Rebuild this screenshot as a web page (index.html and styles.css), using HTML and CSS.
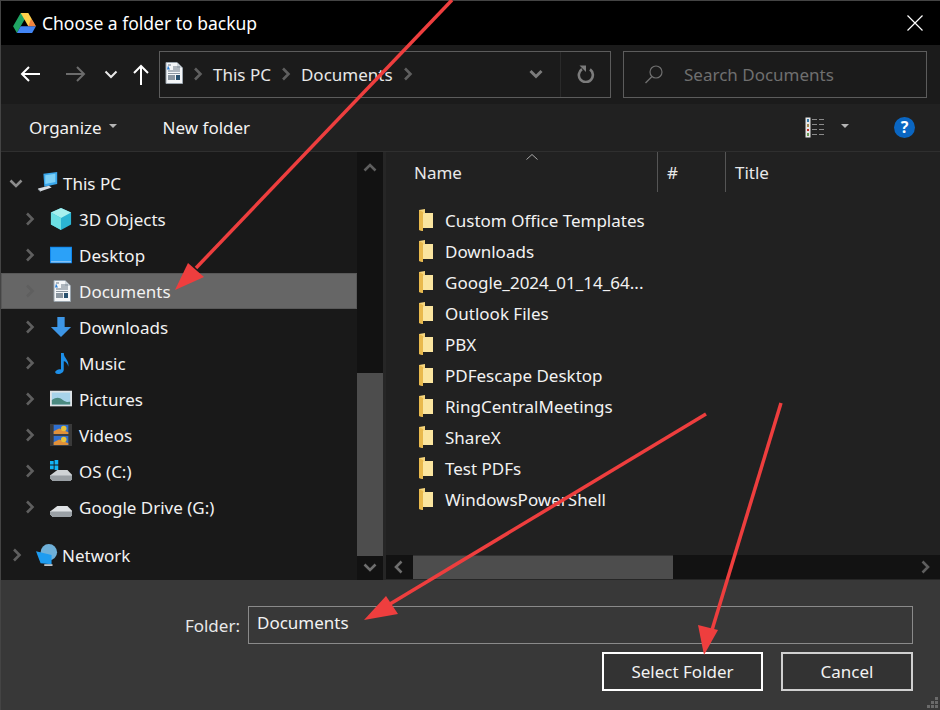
FILE: index.html
```html
<!DOCTYPE html>
<html lang="en">
  <head>
    <meta charset="UTF-8" />
    <title>Choose a folder to backup</title>
    <link rel="stylesheet" href="styles.css">
  </head>
  <body>
    <svg width="0" height="0" class="defs">
      <defs>
        <symbol id="doc" viewBox="0 0 18 22">
          <path d="M1 .5h11l5.500 5.500v15.500h-16.500z" fill="#f4f6f8" stroke="#9aa4ad"/>
          <path d="M12 .5v5.500h5.500z" fill="#cfd6dc"/>
          <path d="M3 3h3M8 5h7M8 7h7M3 9h12" stroke="#6a7885" fill="none"/>
          <path d="M3 3.500l-1 4h3z" fill="#2a7fd6"/>
          <rect x="3" y="11" width="12" height="1" fill="#8b96a0"/>
          <rect x="3" y="13" width="7" height="5" fill="#8b96a0"/>
          <rect x="11" y="13" width="4" height="5" fill="#28506e"/>
        </symbol>
        <symbol id="folder" viewBox="0 0 14 22">
          <path d="M0 1l6-1v4h8v15h-10v3l-4-1z" fill="#f6d67d"/>
          <path d="M4 5l2-1h8v15h-10z" fill="#fbe59f"/>
          <path d="M0 1l4 2v19l-4-1z" fill="#e9b94c"/>
        </symbol>
        <symbol id="chev" viewBox="0 0 10 14">
          <path d="M2 1.500l5.500 5.500-5.500 5.500" fill="none" stroke="#5f5f5f" stroke-width="2.600"/>
        </symbol>
      </defs>
    </svg>

    <div class="dialog">
      <header class="titlebar">
        <svg class="drive-logo" viewBox="0 0 24 21" width="23" height="20">
          <path d="M8 0h8l-8 14-4 7-4-7z" fill="#1fa463"/>
          <path d="M8 0h8l8 14h-8z" fill="#ffd04b"/>
          <path d="M4 21l4-7h16l-4 7z" fill="#4285f4"/>
          <path d="M8 14l4-7 4 7z" fill="#fff" opacity="0"/>
          <path d="M19 6l5 8h-8z" fill="#ea4335" opacity=".55"/>
        </svg>
        <span class="title">Choose a folder to backup</span>
        <svg class="close" viewBox="0 0 16 16" width="16" height="16">
          <path d="M.5.500l15 15M15.500.500l-15 15" stroke="#fff" stroke-width="1.200" fill="none"/>
        </svg>
      </header>

      <div class="navbar">
        <div class="nav-btns">
          <svg width="20" height="16" viewBox="0 0 20 16"><path d="M20 8H2M9 1L2 8l7 7" fill="none" stroke="#fff" stroke-width="2"/></svg>
          <svg class="fwd" width="20" height="16" viewBox="0 0 20 16"><path d="M0 8h18M11 1l7 7-7 7" fill="none" stroke="#6c6c6c" stroke-width="2"/></svg>
          <svg class="recent" width="14" height="9" viewBox="0 0 14 9"><path d="M1.500 1.500L7 7l5.500-5.500" fill="none" stroke="#e8e8e8" stroke-width="2"/></svg>
          <svg class="up" width="16" height="21" viewBox="0 0 16 21"><path d="M8 21V2M1 9l7-7 7 7" fill="none" stroke="#fff" stroke-width="2"/></svg>
        </div>
        <div class="address">
          <svg class="addr-doc"><use href="#doc"/></svg>
          <svg class="crumb-chev"><use href="#chev"/></svg>
          <span class="crumb">This PC</span>
          <svg class="crumb-chev"><use href="#chev"/></svg>
          <span class="crumb">Documents</span>
          <svg class="crumb-chev"><use href="#chev"/></svg>
          <svg class="addr-drop" width="14" height="10" viewBox="0 0 14 10"><path d="M1.500 2L7 7.500 12.500 2" fill="none" stroke="#7c7c7c" stroke-width="3"/></svg>
          <span class="addr-sep"></span>
          <svg class="refresh" width="18" height="18" viewBox="0 0 18 18"><path d="M5 4.200A7 7 0 1 0 13 4.400" fill="none" stroke="#7c7c7c" stroke-width="2.600"/><path d="M2.500 .5h6.500v6.500z" fill="#7c7c7c"/></svg>
        </div>
        <div class="search">
          <svg width="18" height="19" viewBox="0 0 18 19"><circle cx="11" cy="7" r="6" fill="none" stroke="#6f6f6f" stroke-width="1.200"/><path d="M7 11.500L.5 18" stroke="#6f6f6f" stroke-width="1.400"/></svg>
          <span>Search Documents</span>
        </div>
      </div>

      <div class="toolbar">
        <span class="tool">Organize</span>
        <span class="caret"></span>
        <span class="tool new-folder">New folder</span>
        <svg class="views" width="21" height="21" viewBox="0 0 21 21">
          <rect x=".5" y=".5" width="5" height="20" fill="#e8e8e8"/>
          <rect x="2" y="2" width="2" height="3" fill="#3579a8"/>
          <rect x="2" y="7" width="2" height="3" fill="#a38a52"/>
          <rect x="2" y="12" width="2" height="2" fill="#c02d25"/>
          <rect x="2" y="16" width="2" height="3" fill="#6b9a58"/>
          <path d="M7 2.500h5M14 2.500h5M7 7.500h5M14 7.500h5M7 12.500h5M14 12.500h5M7 17.500h5M14 17.500h5" stroke="#8a8a8a"/>
        </svg>
        <span class="caret view-caret"></span>
        <span class="help">?</span>
      </div>

      <div class="panes">
        <nav class="tree-pane">
          <div class="tree">
            <div class="row top first"><svg class="open" width="14" height="9" viewBox="0 0 14 9"><path d="M1.500 1.500L7 7l5.500-5.500" fill="none" stroke="#8c8c8c" stroke-width="2.600"/></svg>
              <svg class="ico" viewBox="0 0 24 24"><path d="M7 2l15-2v13l-14 3z" fill="#3aa7ec"/><path d="M9 3.500l11-1.500v9l-11 2z" fill="#7dd0f7"/><path d="M1 18l12-3 3 2-12 4z" fill="#d8dde2"/><path d="M1 18l3 3v1l-3-3z" fill="#9aa4ad"/></svg>
              <span>This PC</span></div>
            <div class="row"><svg class="chev"><use href="#chev"/></svg>
              <svg class="ico" viewBox="0 0 24 24"><path d="M12 0l11 5v13l-11 6-11-6V5z" fill="#2bb5d3"/><path d="M1 5l11 6 11-6-11-5z" fill="#a6f0ee"/><path d="M1 5l11 6v13l-11-6z" fill="#6ce0e4"/></svg>
              <span>3D Objects</span></div>
            <div class="row"><svg class="chev"><use href="#chev"/></svg>
              <svg class="ico" viewBox="0 0 24 24"><rect y="3" width="24" height="18" fill="#0f84ea"/><rect x="1" y="4" width="22" height="15" fill="#2ba1f8"/><path d="M1 19h22v1H1z" fill="#cfe9fd"/></svg>
              <span>Desktop</span></div>
            <div class="row selected"><svg class="chev"><use href="#chev"/></svg>
              <svg class="ico doc-ico"><use href="#doc"/></svg>
              <span>Documents</span></div>
            <div class="row"><svg class="chev"><use href="#chev"/></svg>
              <svg class="ico" viewBox="0 0 24 24"><path d="M8 1h8v11h7L12 23 1 12h7z" fill="#3d96e6"/></svg>
              <span>Downloads</span></div>
            <div class="row"><svg class="chev"><use href="#chev"/></svg>
              <svg class="ico" viewBox="0 0 24 24"><path d="M12 1h3c0 6 6 7 5 15-1-4-3-6-5-6v9c0 3-3 5-6 5s-4-2-3-3 3-3 6-2z" fill="#1d8fe8"/></svg>
              <span>Music</span></div>
            <div class="row"><svg class="chev"><use href="#chev"/></svg>
              <svg class="ico" viewBox="0 0 24 24"><rect y="3" width="24" height="17" fill="#dfe3e6"/><rect x="2" y="5" width="20" height="13" fill="#a7d3ea"/><path d="M2 13c5-3 8-3 12 0s6 2 8 2v3H2z" fill="#4b8a80"/></svg>
              <span>Pictures</span></div>
            <div class="row"><svg class="chev"><use href="#chev"/></svg>
              <svg class="ico" viewBox="0 0 24 24"><rect width="24" height="24" fill="#3a3a3a"/><rect x="4" y="1" width="16" height="10" fill="#2f6fd0"/><rect x="4" y="13" width="16" height="10" fill="#2f6fd0"/><path d="M4 8l6-3 10 4v2H4zM4 20l6-3 10 4v2H4z" fill="#e0913a"/><circle cx="15" cy="5" r="3" fill="#e8c23a"/><circle cx="15" cy="17" r="3" fill="#e8c23a"/></svg>
              <span>Videos</span></div>
            <div class="row"><svg class="chev"><use href="#chev"/></svg>
              <svg class="ico" viewBox="0 0 24 24"><path d="M0 17l8-6h11l5 5v5l-2 2H3l-3-3z" fill="#cfd3d6"/><path d="M0 17h24v4l-2 2H3l-3-3z" fill="#9aa0a5"/><path d="M0 1h4v4H0zM5 0l4-1v6H5zM0 6h4v4H0zM5 6h4v5H5z" fill="#12b3f5"/></svg>
              <span>OS (C:)</span></div>
            <div class="row"><svg class="chev"><use href="#chev"/></svg>
              <svg class="ico" viewBox="0 0 24 24"><path d="M0 17l8-6h11l5 5v5l-2 2H3l-3-3z" fill="#dfe2e5"/><path d="M0 17h24v4l-2 2H3l-3-3z" fill="#9aa0a5"/></svg>
              <span>Google Drive (G:)</span></div>
            <div class="row top network"><svg class="chev"><use href="#chev"/></svg>
              <svg class="ico" viewBox="0 0 24 24"><circle cx="14" cy="9" r="9" fill="#6fb0d8"/><path d="M0 8l17 4v10l-12-1z" fill="#1e9cf0"/><path d="M9 22h9v2H9z" fill="#bcc4ca"/></svg>
              <span>Network</span></div>
          </div>
          <div class="vscroll">
            <svg class="sb-up" width="14" height="9" viewBox="0 0 14 9"><path d="M1.500 7.500L7 2l5.500 5.500" fill="none" stroke="#5e5e5e" stroke-width="2.600"/></svg>
            <div class="sb-track"><div class="sb-thumb"></div></div>
            <svg class="sb-down" width="14" height="9" viewBox="0 0 14 9"><path d="M1.500 1.500L7 7l5.500-5.500" fill="none" stroke="#6e6e6e" stroke-width="2.600"/></svg>
          </div>
        </nav>

        <section class="files">
          <div class="columns">
            <div class="col col-name">Name
              <svg class="sort" width="12" height="6" viewBox="0 0 12 6"><path d="M.5 5.500L6 .5l5.500 5" fill="none" stroke="#a8a8a8"/></svg>
            </div>
            <div class="col col-num">#</div>
            <div class="col">Title</div>
          </div>
          <ul class="file-list">
            <li><svg class="folder"><use href="#folder"/></svg>Custom Office Templates</li>
            <li><svg class="folder"><use href="#folder"/></svg>Downloads</li>
            <li><svg class="folder"><use href="#folder"/></svg>Google_2024_01_14_64...</li>
            <li><svg class="folder"><use href="#folder"/></svg>Outlook Files</li>
            <li><svg class="folder"><use href="#folder"/></svg>PBX</li>
            <li><svg class="folder"><use href="#folder"/></svg>PDFescape Desktop</li>
            <li><svg class="folder"><use href="#folder"/></svg>RingCentralMeetings</li>
            <li><svg class="folder"><use href="#folder"/></svg>ShareX</li>
            <li><svg class="folder"><use href="#folder"/></svg>Test PDFs</li>
            <li><svg class="folder"><use href="#folder"/></svg>WindowsPowerShell</li>
          </ul>
          <div class="hscroll">
            <svg width="9" height="14" viewBox="0 0 9 14"><path d="M7.500 1.500L2 7l5.500 5.500" fill="none" stroke="#6e6e6e" stroke-width="2.600"/></svg>
            <div class="hs-track"><div class="hs-thumb"></div></div>
            <svg width="9" height="14" viewBox="0 0 9 14"><path d="M1.500 1.500L7 7l-5.500 5.500" fill="none" stroke="#5e5e5e" stroke-width="2.600"/></svg>
          </div>
        </section>
      </div>

      <footer class="bottom">
        <div class="folder-row">
          <label class="folder-label">Folder:</label>
          <div class="folder-input">Documents</div>
        </div>
        <div class="buttons">
          <button class="btn btn-main">Select Folder</button>
          <button class="btn">Cancel</button>
        </div>
        <svg class="grip" width="12" height="12" viewBox="0 0 12 12"><path d="M8 0h3v3H8zM4 4h3v3H4zM8 4h3v3H8zM0 8h3v3H0zM4 8h3v3H4zM8 8h3v3H8z" fill="#6a6a6a"/></svg>
      </footer>
    </div>

    <!-- red annotation arrows drawn over the dialog -->
    <svg class="arrows" width="940" height="710" viewBox="0 0 940 710">
      <g stroke="#ee3e3e" stroke-width="3.500" fill="#ee3e3e">
        <path d="M452 0L196 268"/>
        <path d="M175 290l13-27 16 14z" stroke="none"/>
        <path d="M706 414L390 604"/>
        <path d="M364 620l22-24 12 18z" stroke="none"/>
        <path d="M781 403L712 630"/>
        <path d="M704 655l-6-30 20 5z" stroke="none"/>
      </g>
    </svg>
  </body>
</html>
```

FILE: styles.css
```css
* {
  margin: 0;
  padding: 0;
  box-sizing: border-box;
}

body {
  position: relative;
  width: 940px;
  height: 710px;
  overflow: hidden;
  background: #383838;
  font-family: "Noto Sans", "Open Sans", sans-serif;
  font-size: 17px;
  color: #f2f2f2;
}

.defs {
  position: absolute;
}

.dialog {
  height: 710px;
  display: flex;
  flex-direction: column;
  border-top: 1px solid #444;
  border-left: 1px solid #444;
}

/* title bar */
.titlebar {
  height: 44px;
  flex: none;
  background: #000;
  display: flex;
  align-items: center;
  padding-left: 12px;
}

.title {
  margin-left: 6px;
  font-size: 17.500px;
  color: #fff;
}

.close {
  margin-left: auto;
  margin-right: 17px;
}

/* nav bar */
.navbar {
  height: 59px;
  flex: none;
  background: #1b1b1b;
  display: flex;
  align-items: center;
  padding: 0 12px 1px 0;
}

.nav-btns {
  width: 158px;
  display: flex;
  align-items: center;
  padding-left: 19px;
}

.fwd {
  margin-left: 26px;
}

.recent {
  margin-left: 18px;
}

.up {
  margin-left: 15px;
}

.address {
  width: 452px;
  height: 47px;
  border: 1px solid #5c5c5c;
  display: flex;
  align-items: center;
  padding-left: 5px;
}

.addr-doc {
  width: 18px;
  height: 22px;
  margin-top: -3px;
}

.crumb-chev {
  width: 10px;
  height: 14px;
  margin: 0 10px;
}

.crumb {
  color: #e8e8e8;
}

.addr-drop {
  margin-left: auto;
  margin-right: 17px;
}

.addr-sep {
  width: 1px;
  height: 45px;
  background: #2a2a2a;
}

.refresh {
  margin: 0 15px 0 16px;
}

.search {
  width: 304px;
  height: 47px;
  margin-left: 12px;
  border: 1px solid #5c5c5c;
  display: flex;
  align-items: center;
  padding-left: 21px;
  color: #6f6f6f;
}

.search span {
  margin-left: 21px;
}

/* toolbar */
.toolbar {
  height: 48px;
  flex: none;
  background: #212121;
  border-bottom: 1px solid #2f2f2f;
  display: flex;
  align-items: center;
  padding-left: 28px;
}

.tool {
  color: #f2f2f2;
}

.caret {
  width: 0;
  height: 0;
  margin-left: 7px;
  margin-top: -3px;
  border-left: 4px solid transparent;
  border-right: 4px solid transparent;
  border-top: 4px solid #b5b5b5;
}

.new-folder {
  margin-left: 46px;
}

.views {
  margin-left: auto;
}

.view-caret {
  margin-left: 15px;
}

.help {
  width: 21px;
  height: 21px;
  margin-left: 45px;
  margin-right: 25px;
  border-radius: 50%;
  background: #0a66c2;
  color: #fff;
  font-size: 16px;
  font-weight: 700;
  line-height: 21px;
  text-align: center;
}

/* panes */
.panes {
  height: 428px;
  flex: none;
  display: flex;
}

.tree-pane {
  width: 385px;
  flex: none;
  display: flex;
  background: #191919;
  border-right: 3px solid #262626;
}

.tree {
  width: 356px;
  flex: none;
  padding-top: 13px;
}

.row {
  height: 36px;
  display: flex;
  align-items: center;
  padding-left: 24px;
  color: #f2f2f2;
}

.row.top {
  padding-left: 11px;
}

.row.network {
  margin-top: 12px;
}

.row.selected {
  background: #666;
  border: 1px solid #585858;
  padding-left: 23px;
}

.chev {
  width: 10px;
  height: 14px;
}

.row.selected .chev path {
  stroke: #8e8e8e;
}

.row .open {
  margin-left: -3px;
}

.ico {
  width: 22px;
  height: 22px;
  flex: none;
  margin-left: 15px;
  margin-right: 7px;
}

.row.top .ico {
  margin-left: 14px;
  margin-right: 4px;
}

.doc-ico {
  width: 18px;
  margin-left: 18px;
  margin-right: 8px;
}

.vscroll {
  width: 26px;
  flex: none;
  background: #121212;
  display: flex;
  flex-direction: column;
  align-items: center;
}

.sb-up {
  margin-top: 11px;
  flex: none;
}

.sb-down {
  margin-bottom: 8px;
  flex: none;
}

.sb-track {
  flex: 1;
  width: 100%;
  display: flex;
  flex-direction: column;
  justify-content: flex-end;
}

.sb-thumb {
  height: 183px;
  margin-bottom: 7px;
  background: #4d4d4d;
}

/* file list */
.files {
  flex: 1;
  display: flex;
  flex-direction: column;
  background: #212121;
}

.columns {
  height: 40px;
  flex: none;
  display: flex;
  color: #e8e8e8;
}

.col {
  display: flex;
  align-items: center;
  padding-left: 9px;
  position: relative;
}

.col-name {
  width: 272px;
  padding-left: 28px;
  border-right: 1px solid #555;
}

.col-num {
  width: 68px;
  border-right: 1px solid #555;
}

.sort {
  position: absolute;
  top: 2px;
  left: 140px;
}

.file-list {
  list-style: none;
  flex: 1;
  padding-top: 13px;
}

.file-list li {
  height: 31px;
  display: flex;
  align-items: center;
  padding-left: 33px;
}

.folder {
  width: 14px;
  height: 22px;
  margin-right: 12px;
  margin-top: -2px;
}

.hscroll {
  height: 25px;
  flex: none;
  background: #121212;
  display: flex;
  align-items: center;
  padding: 0 10px 0 8px;
  border-bottom: 1px solid #262626;
}

.hs-track {
  flex: 1;
  height: 100%;
  margin: 0 8px 0 10px;
}

.hs-thumb {
  width: 260px;
  height: 100%;
  background: #4d4d4d;
  border-top: 1px solid #333;
}

/* bottom part */
.bottom {
  flex: 1;
  background: #383838;
  position: relative;
  padding: 26px 27px 0 0;
}

.folder-row {
  display: flex;
  align-items: center;
  justify-content: flex-end;
}

.folder-label {
  margin-right: 8px;
  color: #e8e8e8;
}

.folder-input {
  width: 665px;
  height: 38px;
  border: 1px solid #8a8a8a;
  padding-left: 8px;
  line-height: 32px;
  color: #f2f2f2;
}

.buttons {
  display: flex;
  justify-content: flex-end;
  gap: 18px;
  margin-top: 8px;
}

.btn {
  width: 132px;
  height: 39px;
  background: #333;
  border: 2px solid #d0d0d0;
  color: #f2f2f2;
  font-family: inherit;
  font-size: 17px;
}

.btn-main {
  width: 161px;
  border-color: #fff;
}

.grip {
  position: absolute;
  right: 1px;
  bottom: 1px;
}

.arrows {
  position: absolute;
  top: 0;
  left: 0;
  pointer-events: none;
}
```
